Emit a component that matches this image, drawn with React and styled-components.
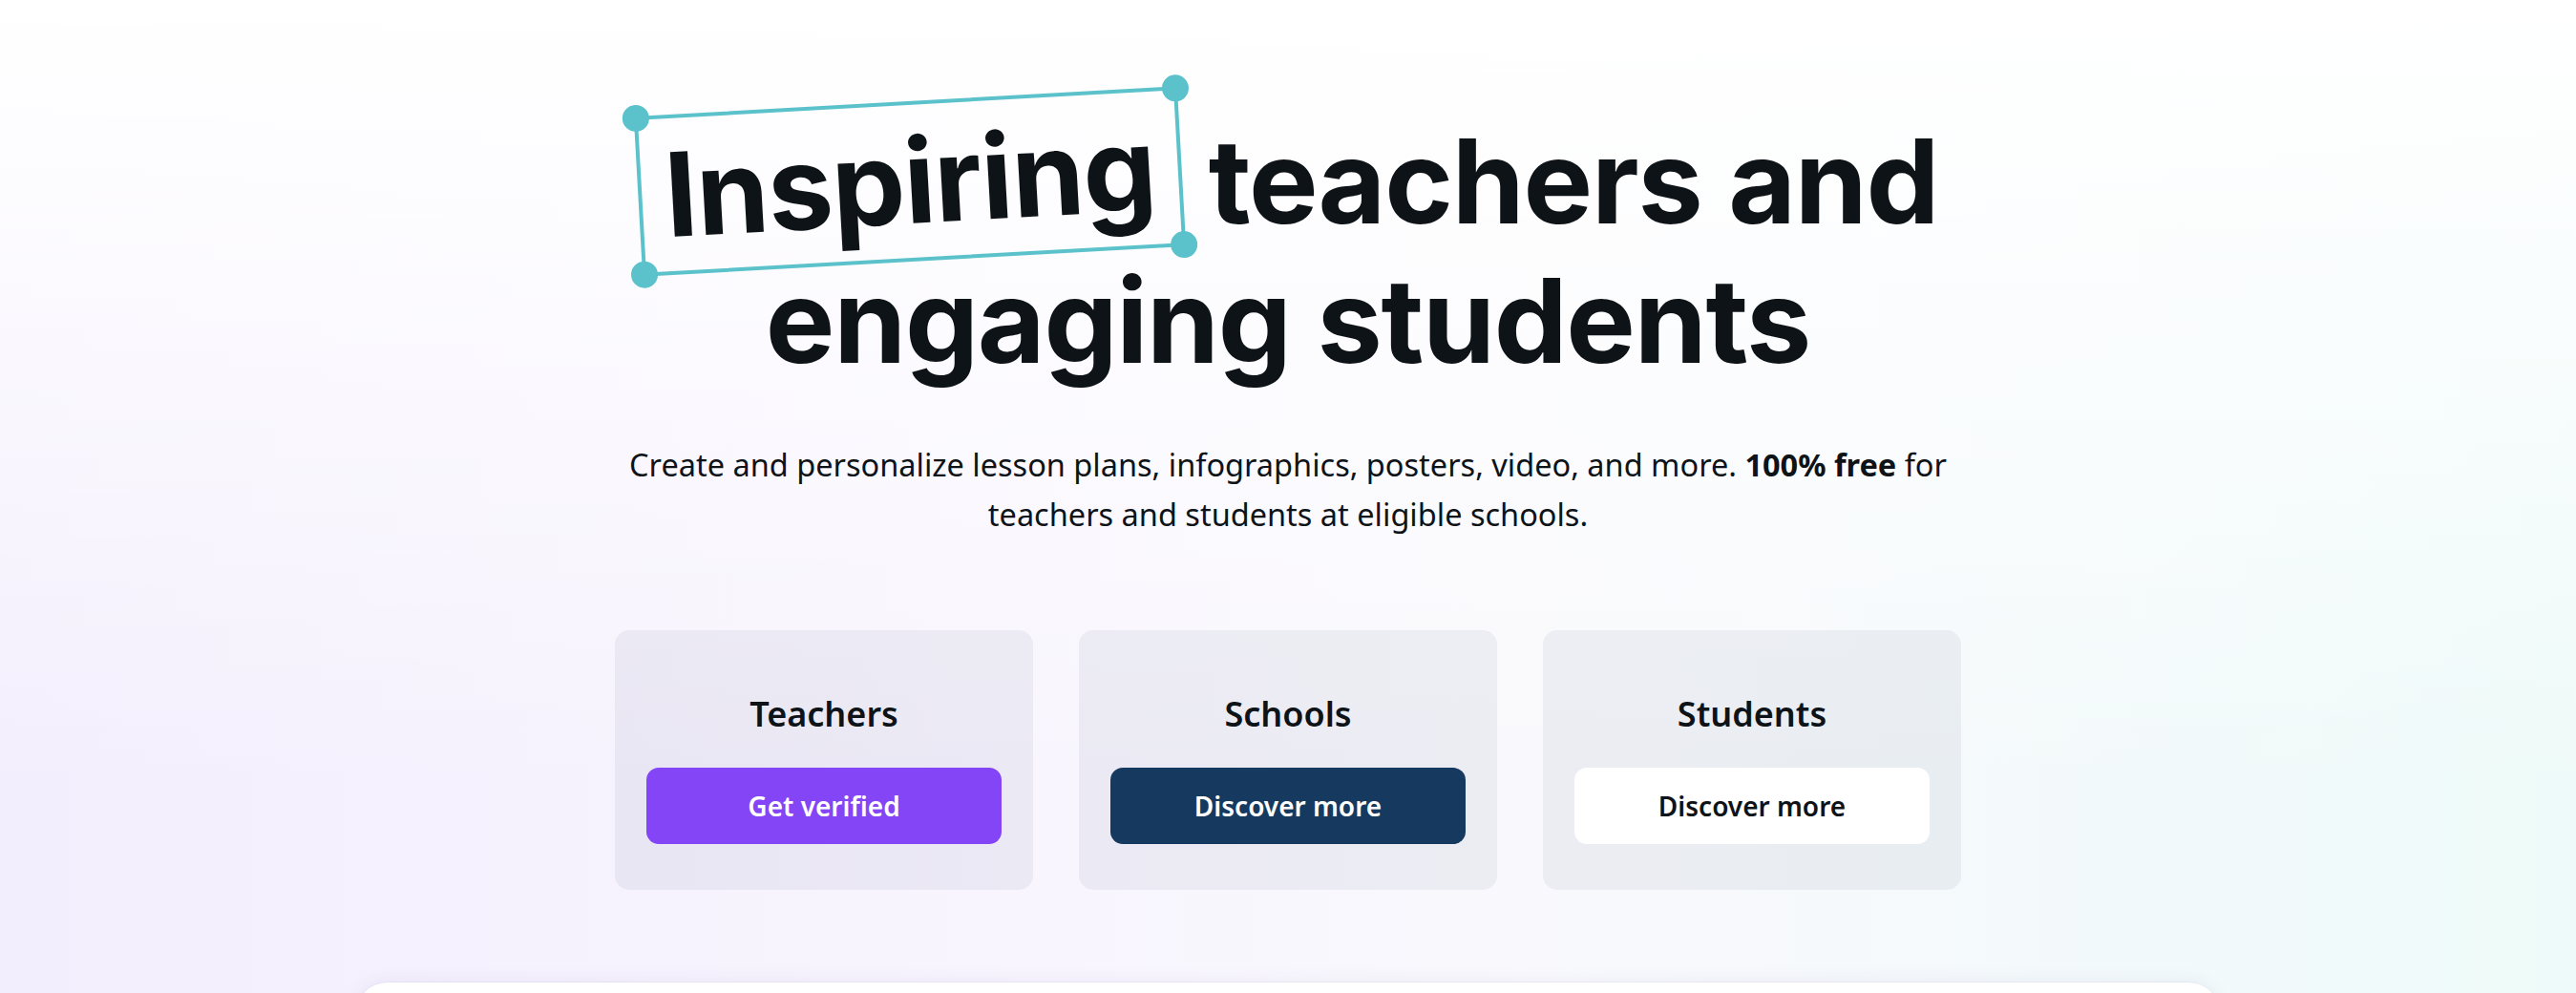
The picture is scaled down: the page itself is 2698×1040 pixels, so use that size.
import React from 'react';
import styled, { createGlobalStyle } from 'styled-components';

const Global = createGlobalStyle`
  html, body { margin: 0; padding: 0; }
  body {
    font-family: "Noto Sans", "Open Sans", sans-serif;
    color: #0d1216;
    -webkit-font-smoothing: antialiased;
  }
  * { box-sizing: border-box; }
`;

const Page = styled.main`
  height: 1040px;
  overflow: hidden;
  display: flex;
  flex-direction: column;
  align-items: center;
  padding-top: 117px;
  background:
    linear-gradient(180deg, #ffffff 0%, rgba(255, 255, 255, 0.6) 35%, rgba(255, 255, 255, 0) 80%),
    linear-gradient(90deg, #f3eefd 0%, #f8f5fe 40%, #f9f9fd 60%, #eefaf9 100%);
`;

const Headline = styled.h1`
  margin: 0;
  font-family: Inter, "Noto Sans", sans-serif;
  font-weight: 700;
  font-size: 122px;
  line-height: 146px;
  letter-spacing: -0.01em;
  text-align: center;
  color: #0e1318;
`;

const Line = styled.span`
  display: block;
  white-space: nowrap;
`;

const Highlight = styled.span`
  position: relative;
  display: inline-block;
  padding: 0 28px;
  transform: rotate(-3.2deg);
`;

const Frame = styled.span`
  position: absolute;
  top: -11px;
  bottom: -11px;
  left: 0;
  right: 0;
  border: 4px solid #5bc2cb;
  pointer-events: none;
`;

const Handle = styled.span`
  position: absolute;
  width: 28px;
  height: 28px;
  border-radius: 50%;
  background: #5bc2cb;
  ${(p) => (p.$top ? 'top: -16px;' : 'bottom: -16px;')}
  ${(p) => (p.$left ? 'left: -16px;' : 'right: -16px;')}
`;

const Lead = styled.p`
  margin: 52px 0 0;
  max-width: 1440px;
  font-size: 32.5px;
  line-height: 52px;
  text-align: center;
  color: #0e1318;

  strong {
    font-weight: 700;
  }
`;

const Cards = styled.div`
  display: grid;
  grid-template-columns: repeat(3, 438px);
  gap: 48px;
  margin-top: 95px;
`;

const Card = styled.div`
  display: flex;
  flex-direction: column;
  gap: 31px;
  padding: 63px 33px 48px;
  border-radius: 15px;
  background: rgba(64, 87, 109, 0.07);
  text-align: center;
`;

const CardTitle = styled.h2`
  margin: 0;
  font-size: 36px;
  line-height: 50px;
  font-weight: 600;
  color: #0e1318;
`;

const variants = {
  purple: { bg: '#8345f5', fg: '#ffffff' },
  navy: { bg: '#163a5f', fg: '#ffffff' },
  white: { bg: '#ffffff', fg: '#0e1318' },
};

const Button = styled.button`
  height: 80px;
  border: none;
  border-radius: 13px;
  font-family: inherit;
  font-size: 28px;
  font-weight: 600;
  cursor: pointer;
  background: ${(p) => variants[p.$variant].bg};
  color: ${(p) => variants[p.$variant].fg};
`;

const Sheet = styled.section`
  width: 1954px;
  height: 400px;
  flex-shrink: 0;
  margin-top: 97px;
  background: #ffffff;
  border-radius: 34px 34px 0 0;
  box-shadow: 0 0 0 1px rgba(90, 70, 150, 0.05), 0 -4px 16px rgba(90, 70, 150, 0.06);
`;

const audiences = [
  { title: 'Teachers', cta: 'Get verified', variant: 'purple' },
  { title: 'Schools', cta: 'Discover more', variant: 'navy' },
  { title: 'Students', cta: 'Discover more', variant: 'white' },
];

export default function App() {
  return (
    <>
      <Global />
      <Page>
        <Headline>
          <Line>
            <Highlight>
              Inspiring
              <Frame>
                <Handle $top $left />
                <Handle $top />
                <Handle $left />
                <Handle />
              </Frame>
            </Highlight>{' '}
            teachers and
          </Line>
          <Line>engaging students</Line>
        </Headline>
        <Lead>
          Create and personalize lesson plans, infographics, posters, video, and more.{' '}
          <strong>100% free</strong> for teachers and students at eligible schools.
        </Lead>
        <Cards>
          {audiences.map((a) => (
            <Card key={a.title}>
              <CardTitle>{a.title}</CardTitle>
              <Button $variant={a.variant}>{a.cta}</Button>
            </Card>
          ))}
        </Cards>
        <Sheet />
      </Page>
    </>
  );
}
